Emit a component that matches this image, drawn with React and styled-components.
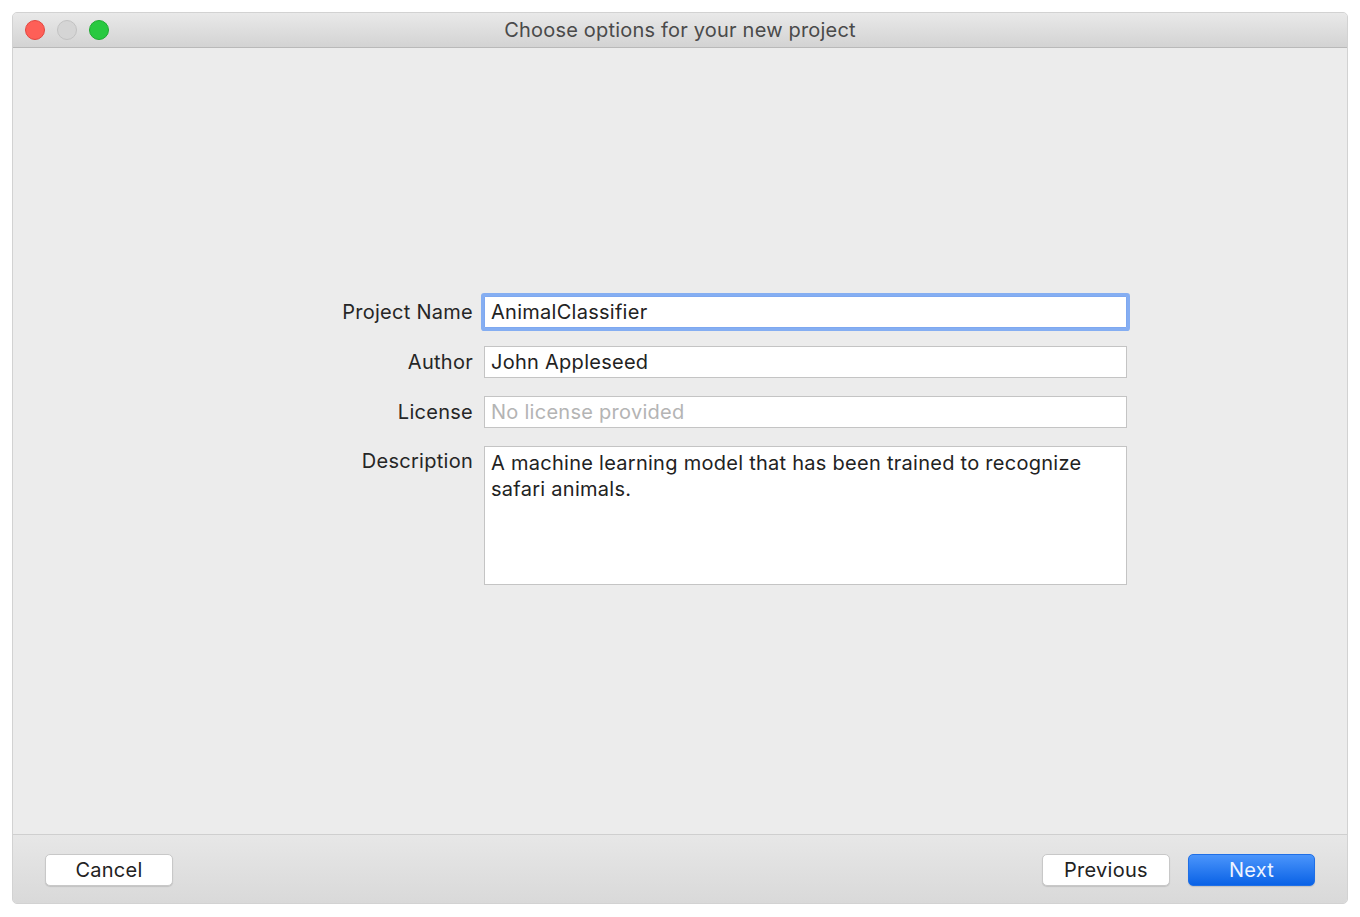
import React from 'react'
import styled, { createGlobalStyle } from 'styled-components';

const GlobalStyle = createGlobalStyle`
    html, body {
        margin: 0;
        padding: 0;
        background: #ffffff;
    }
    body {
        font-family: Inter, "Noto Sans", "Liberation Sans", sans-serif;
        -webkit-font-smoothing: antialiased;
    }
`;

const fields = [
    { label: 'Project Name', value: 'AnimalClassifier', focused: true },
    { label: 'Author', value: 'John Appleseed' },
    { label: 'License', placeholder: 'No license provided' },
];

const description = 'A machine learning model that has been trained to recognize safari animals.';

export default function App() {
    return (
        <Page>
            <GlobalStyle />
            <Window>
                <TitleBar>
                    <Lights>
                        <Light color="#fe5f57" edge="#e2463f" />
                        <Light color="#d5d5d5" edge="#c2c2c2" />
                        <Light color="#28c940" edge="#1eaa31" />
                    </Lights>
                    <Title>Choose options for your new project</Title>
                </TitleBar>

                <Content>
                    <Form>
                        {fields.map(f => (
                            <React.Fragment key={f.label}>
                                <Label>{f.label}</Label>
                                <Field focused={f.focused}>
                                    {f.value
                                        ? <span>{f.value}</span>
                                        : <Placeholder>{f.placeholder}</Placeholder>}
                                </Field>
                            </React.Fragment>
                        ))}
                        <Label top>Description</Label>
                        <TextArea>{description}</TextArea>
                    </Form>
                </Content>

                <Footer>
                    <Button>Cancel</Button>
                    <RightButtons>
                        <Button>Previous</Button>
                        <Button primary>Next</Button>
                    </RightButtons>
                </Footer>
            </Window>
        </Page>
    )
}

const Page = styled.div`
    padding: 12px;
    height: 917px;
    box-sizing: border-box;
`;

const Window = styled.div`
    width: 1336px;
    height: 892px;
    display: flex;
    flex-direction: column;
    background: #ececec;
    border: 1px solid #d2d2d2;
    border-radius: 5px;
    box-sizing: border-box;
    overflow: hidden;
`;

const TitleBar = styled.div`
    height: 34px;
    flex-shrink: 0;
    display: flex;
    align-items: center;
    justify-content: center;
    position: relative;
    background: linear-gradient(#e9e9e9, #d3d3d3);
    border-bottom: 1px solid #b9b9b9;
`;

const Lights = styled.div`
    position: absolute;
    left: 12px;
    top: 7px;
    display: flex;
    gap: 12px;
`;

const Light = styled.span`
    width: 20px;
    height: 20px;
    border-radius: 50%;
    box-sizing: border-box;
    background: ${p => p.color};
    border: 1px solid ${p => p.edge};
`;

const Title = styled.div`
    font-size: 20px;
    color: #4a4a4a;
    letter-spacing: 0.2px;
`;

const Content = styled.div`
    flex: 1;
    display: flex;
    align-items: center;
    justify-content: center;
`;

const Form = styled.div`
    display: grid;
    grid-template-columns: 240px 643px;
    column-gap: 11px;
    row-gap: 18px;
    align-items: center;
    margin-top: -2px;
    letter-spacing: 0.27px;
`;

const Label = styled.div`
    text-align: right;
    font-size: 20px;
    color: #262626;
    align-self: ${p => p.top ? 'start' : 'center'};
    padding-top: ${p => p.top ? '3px' : '0'};
`;

const Field = styled.div`
    height: 32px;
    box-sizing: border-box;
    background: #ffffff;
    border: 1px solid ${p => p.focused ? '#7ea8f0' : '#c4c4c4'};
    box-shadow: ${p => p.focused ? '0 0 0 3px #85aef2' : 'none'};
    border-radius: ${p => p.focused ? '1px' : '0'};
    padding: 0 6px;
    display: flex;
    align-items: center;
    font-size: 20px;
    color: #222222;
`;

const Placeholder = styled.span`
    color: #b4b4b4;
`;

const TextArea = styled.div`
    height: 139px;
    box-sizing: border-box;
    background: #ffffff;
    border: 1px solid #c4c4c4;
    padding: 3px 6px;
    font-size: 20px;
    line-height: 26px;
    color: #222222;
`;

const Footer = styled.div`
    height: 69px;
    flex-shrink: 0;
    box-sizing: border-box;
    border-top: 1px solid #cfcfcf;
    background: linear-gradient(#e7e7e7, #d9d9d9);
    display: flex;
    align-items: flex-start;
    justify-content: space-between;
    padding: 19px 32px 0 32px;
`;

const RightButtons = styled.div`
    display: flex;
    gap: 18px;
`;

const Button = styled.button`
    width: ${p => p.primary ? '127px' : '128px'};
    height: 32px;
    border-radius: 5px;
    font-family: inherit;
    font-size: 20px;
    letter-spacing: 0.27px;
    padding: 0;
    cursor: pointer;
    box-sizing: border-box;
    color: ${p => p.primary ? '#eef4ff' : '#222222'};
    background: ${p => p.primary ? 'linear-gradient(#4b95fb, #0a62e6)' : '#ffffff'};
    border: 1px solid ${p => p.primary ? '#1f6fe6' : '#c8c8c8'};
    box-shadow: 0 1px 1px rgba(0, 0, 0, 0.12);
`;
